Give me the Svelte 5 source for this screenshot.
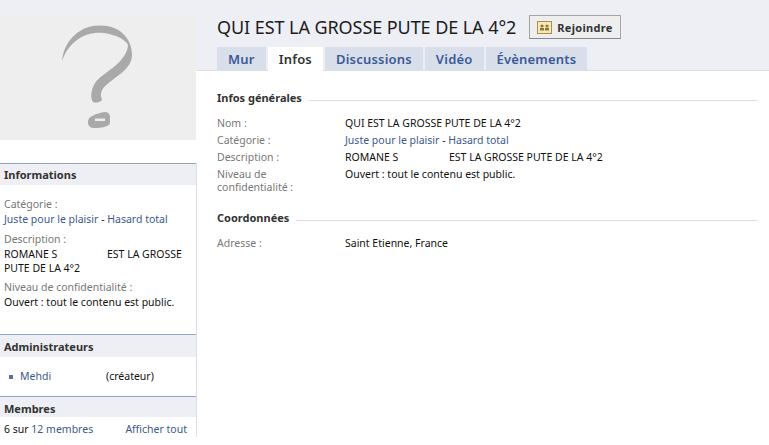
<script lang="ts">
	const tabs = ['Mur', 'Infos', 'Discussions', 'Vidéo', 'Évènements'];
	const active = 'Infos';
</script>

<div class="page">
	<aside class="sidebar">
		<div class="picture">
			<svg width="196" height="124" viewBox="0 16 196 124">
				<path d="M62 61 C63 48 70 37 80 31 C89 25 103 24 114 28 C125 32 132 43 132 55 C132 64 125 71 115 78 C107 84 101 88 101 95 C101 98 102 99 102 100 C99 103 95 103 93 102 C90 98 91 90 95 83 C99 77 108 72 115 66 C122 60 128 52 128 45 C125 39 116 35 104 33 C94 32 85 34 77 40 C70 45 65 52 62 61 Z" fill="#a9a9a9" />
				<path d="M88 122 C88 117 93 115 100 113 C106 111 109 112 110 116 L110 123 C109 127 101 128 95 128 C90 128 88 126 88 122 Z" fill="#a9a9a9" />
				<rect x="95" y="118.500" width="10" height="2.500" fill="#eee" />
			</svg>
		</div>

		<section class="box info-box">
			<h3>Informations</h3>
			<div class="info-body">
				<div class="info-item">
					<div class="muted">Catégorie :</div>
					<div><a href="#c">Juste pour le plaisir</a> - <a href="#h">Hasard total</a></div>
				</div>
				<div class="info-item">
					<div class="muted">Description :</div>
					<div class="desc"><span class="first">ROMANE S</span>EST LA GROSSE PUTE DE LA 4°2</div>
				</div>
				<div class="info-item">
					<div class="muted">Niveau de confidentialité :</div>
					<div>Ouvert : tout le contenu est public.</div>
				</div>
			</div>
		</section>

		<section class="box admin-box">
			<h3>Administrateurs</h3>
			<div class="admin-row">
				<span class="bullet"></span>
				<a class="admin-name" href="#m">Mehdi</a>
				<span>(créateur)</span>
			</div>
		</section>

		<section class="box members-box">
			<h3>Membres</h3>
			<div class="members-row">
				<span>6 sur <a href="#m">12 membres</a></span>
				<a href="#a">Afficher tout</a>
			</div>
		</section>
	</aside>

	<main class="main">
		<header class="head">
			<div class="title-row">
				<h1>QUI EST LA GROSSE PUTE DE LA 4°2</h1>
				<button class="join">
					<svg width="15" height="13" viewBox="0 0 15 13">
						<rect x="0.5" y="0.5" width="14" height="12" fill="#f6e8b4" stroke="#a89150" />
						<circle cx="5" cy="5" r="1.6" fill="#8c7a3c" />
						<circle cx="10" cy="5" r="1.6" fill="#8c7a3c" />
						<rect x="3" y="7" width="4" height="2.500" fill="#8c7a3c" />
						<rect x="8" y="7" width="4" height="2.500" fill="#8c7a3c" />
					</svg>
					Rejoindre
				</button>
			</div>
			<nav class="tabs">
				{#each tabs as tab}
					<span class="tab" class:active={tab === active}>{tab}</span>
				{/each}
			</nav>
		</header>

		<div class="content">
			<div class="section-title"><h4>Infos générales</h4><span class="rule"></span></div>
			<dl class="rows">
				<dt>Nom :</dt>
				<dd>QUI EST LA GROSSE PUTE DE LA 4°2</dd>
				<dt>Catégorie :</dt>
				<dd><a href="#c">Juste pour le plaisir</a> - <a href="#h">Hasard total</a></dd>
				<dt>Description :</dt>
				<dd><span class="first wide">ROMANE S</span>EST LA GROSSE PUTE DE LA 4°2</dd>
				<dt>Niveau de confidentialité :</dt>
				<dd>Ouvert : tout le contenu est public.</dd>
			</dl>
			<div class="section-title second"><h4>Coordonnées</h4><span class="rule"></span></div>
			<dl class="rows">
				<dt>Adresse :</dt>
				<dd>Saint Etienne, France</dd>
			</dl>
		</div>
	</main>
</div>

<style>
	:global(body) {
		margin: 0;
		background: #fff;
	}

	.page {
		display: flex;
		width: 769px;
		height: 445px;
		overflow: hidden;
		font-family: "Noto Sans", "DejaVu Sans", sans-serif;
		font-size: 10.5px;
		line-height: 13px;
		color: #111;
	}

	a {
		color: #3b5a8c;
		text-decoration: none;
	}

	.sidebar {
		width: 197px;
		flex: none;
	}

	.picture {
		height: 124px;
		padding-top: 16px;
		background: linear-gradient(#edeff4 71px, #fff 71px);
	}

	.picture svg {
		display: block;
		background: #eee;
	}

	.box {
		border-right: 1px solid #d8dfea;
	}

	.box h3 {
		margin: 0;
		height: 21px;
		padding-left: 4px;
		border-top: 1px solid #94a3c4;
		background: #edeff4;
		font-size: 11px;
		line-height: 21px;
		font-weight: 700;
		color: #333;
	}

	.info-box {
		margin-top: 23px;
		height: 171px;
	}

	.info-body {
		padding: 12px 4px 0;
	}

	.info-item {
		margin-bottom: 4px;
		padding-bottom: 1px;
		line-height: 15px;
	}

	.info-item .desc {
		line-height: 14px;
	}

	.muted {
		color: #777;
	}

	.first {
		display: inline-block;
		width: 103px;
	}

	.admin-box {
		height: 62px;
	}

	.admin-box h3 {
		height: 22px;
		line-height: 23px;
	}

	.admin-row {
		display: flex;
		align-items: center;
		padding: 12px 0 0 9px;
		line-height: 15px;
	}

	.bullet {
		width: 4px;
		height: 4px;
		background: #5a6f9d;
		margin-right: 7px;
	}

	.admin-name {
		width: 86px;
	}

	.members-box h3 {
		height: 20px;
		line-height: 23px;
	}

	.members-row {
		display: flex;
		justify-content: space-between;
		padding: 5px 9px 0 4px;
		line-height: 15px;
	}

	.main {
		flex: 1;
		min-width: 0;
	}

	.head {
		height: 71px;
		background: #edeff4;
		border-bottom: 1px solid #d8dfea;
		box-sizing: border-box;
		padding: 15px 0 0 20px;
	}

	.title-row {
		display: flex;
		align-items: center;
		gap: 13px;
		height: 24px;
	}

	h1 {
		margin: 0;
		font-size: 18px;
		font-weight: 400;
		line-height: 24px;
		color: #1c1c1c;
		letter-spacing: -0.07px;
	}

	.join {
		display: flex;
		align-items: center;
		gap: 5px;
		height: 24px;
		padding: 0 7px;
		border: 1px solid #a5a5a5;
		border-bottom-color: #888;
		background: #eee;
		font: 700 11px "Noto Sans", sans-serif;
		letter-spacing: 0.3px;
		color: #333;
	}

	.tabs {
		display: flex;
		gap: 2px;
		margin-top: 8px;
		align-items: flex-end;
	}

	.tab {
		height: 23px;
		padding: 0 11px;
		background: #d8dfea;
		color: #3b5998;
		font-size: 13px;
		font-weight: 600;
		letter-spacing: 0.2px;
		line-height: 24px;
	}

	.tab.active {
		height: 24px;
		background: #fff;
		color: #333;
		margin-bottom: -1px;
	}

	.content {
		padding: 19px 12px 0 20px;
	}

	.section-title {
		display: flex;
		align-items: center;
		gap: 7px;
		height: 14px;
	}

	.section-title.second {
		margin-top: 16px;
	}

	h4 {
		margin: 0;
		font-size: 11px;
		font-weight: 700;
		color: #333;
	}

	.rule {
		flex: 1;
		height: 1px;
		background: #dcdcdc;
		margin-top: 6px;
	}

	.rows {
		display: grid;
		grid-template-columns: 128px 1fr;
		row-gap: 4px;
		margin: 13px 0 0;
	}

	dt {
		color: #777;
		width: 90px;
	}

	dd {
		margin: 0;
	}

	.first.wide {
		width: 104px;
	}
</style>
